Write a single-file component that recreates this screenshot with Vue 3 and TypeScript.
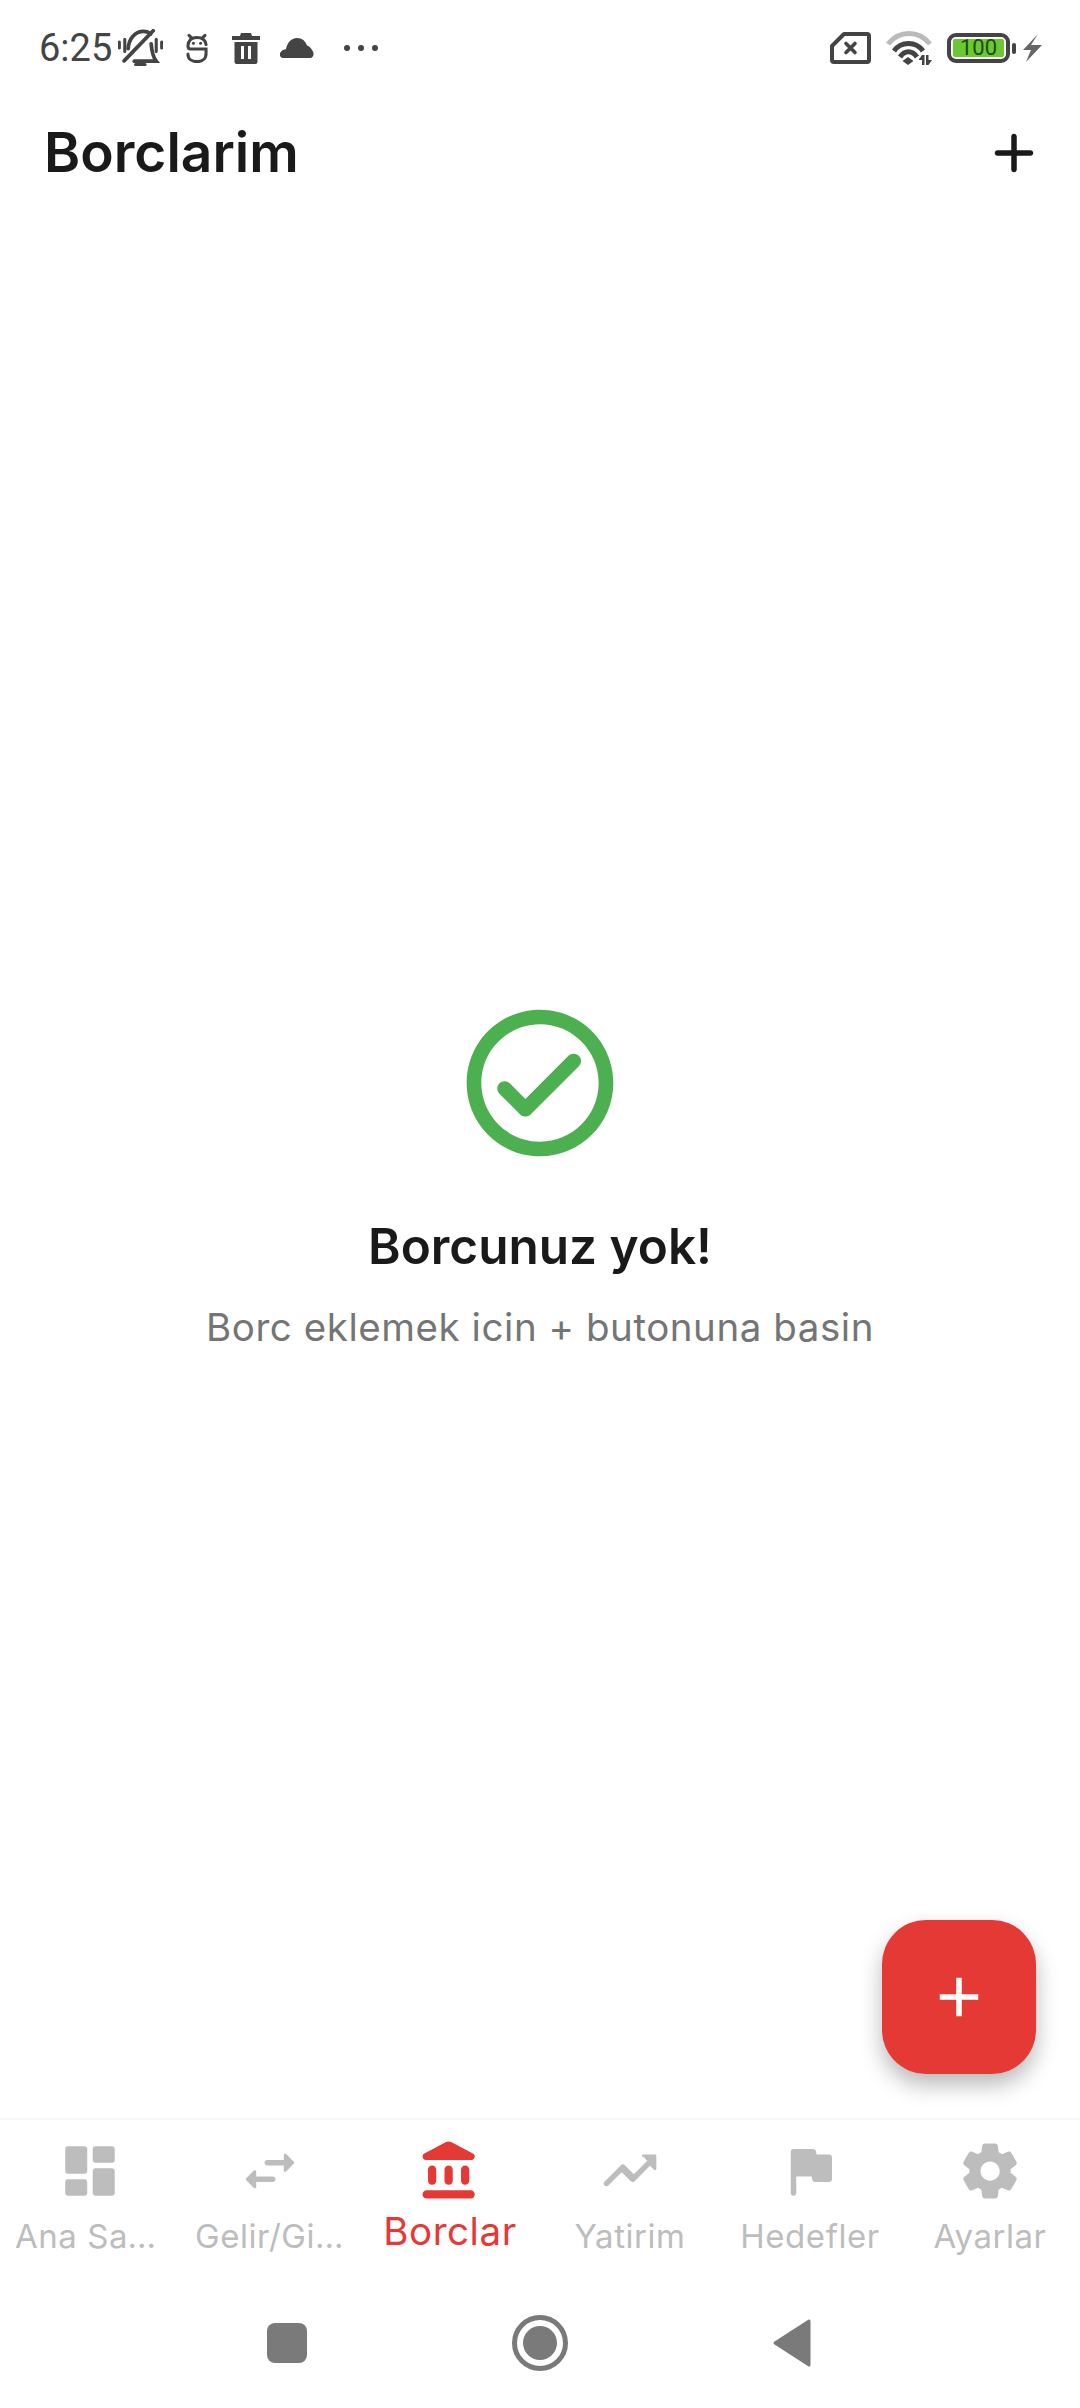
<script setup lang="ts">
interface Tab { label: string; d: string; active?: boolean }
const tabs: Tab[] = [
  { label: 'Ana Sayfa', d: 'M4 13h6c.55 0 1-.45 1-1V4c0-.55-.45-1-1-1H4c-.55 0-1 .45-1 1v8c0 .55.45 1 1 1zm0 8h6c.55 0 1-.45 1-1v-4c0-.55-.45-1-1-1H4c-.55 0-1 .45-1 1v4c0 .55.45 1 1 1zm10 0h6c.55 0 1-.45 1-1v-8c0-.55-.45-1-1-1h-6c-.55 0-1 .45-1 1v8c0 .55.45 1 1 1zM13 4v4c0 .55.45 1 1 1h6c.55 0 1-.45 1-1V4c0-.55-.45-1-1-1h-6c-.55 0-1 .45-1 1z' },
  { label: 'Gelir/Gider', d: 'M6.14 11.86l-2.78 2.79c-.19.2-.19.51 0 .71l2.78 2.79c.31.32.85.09.85-.35V16H13c.55 0 1-.45 1-1s-.45-1-1-1H6.99v-1.79c0-.45-.54-.67-.85-.35zm14.51-3.21l-2.78-2.79c-.31-.32-.85-.09-.85.35V8H11c-.55 0-1 .45-1 1s.45 1 1 1h6.01v1.79c0 .45.54.67.85.35l2.78-2.79c.2-.19.2-.51.01-.7z' },
  { label: 'Borclar', active: true, d: 'M4 11.5v4c0 .83.67 1.5 1.5 1.5S7 16.33 7 15.5v-4c0-.83-.67-1.5-1.5-1.5S4 10.67 4 11.5zm6 0v4c0 .83.67 1.5 1.5 1.5s1.5-.67 1.5-1.5v-4c0-.83-.67-1.5-1.5-1.5s-1.5.67-1.5 1.5zM3.5 22h16c.83 0 1.5-.67 1.5-1.5s-.67-1.5-1.5-1.5h-16c-.83 0-1.5.67-1.5 1.5S2.67 22 3.5 22zM16 11.5v4c0 .83.67 1.5 1.5 1.5s1.5-.67 1.5-1.5v-4c0-.83-.67-1.5-1.5-1.5s-1.5.67-1.5 1.5zM10.57 1.49l-7.9 4.16c-.41.21-.67.64-.67 1.1C2 7.44 2.56 8 3.25 8h16.51C20.44 8 21 7.44 21 6.75c0-.46-.26-.89-.67-1.1l-7.9-4.16c-.58-.31-1.28-.31-1.86 0z' },
  { label: 'Yatirim', d: 'M16.85 6.85l1.44 1.44-4.88 4.88-3.29-3.29c-.39-.39-1.02-.39-1.41 0l-6 6.01c-.39.39-.39 1.02 0 1.41.39.39 1.02.39 1.41 0L9 12.41l3.29 3.29c.39.39 1.02.39 1.41 0l5.59-5.58 1.44 1.44c.31.31.85.09.85-.35V6.5c.01-.28-.21-.5-.49-.5h-4.29c-.45 0-.67.54-.35.85z' },
  { label: 'Hedefler', d: 'M14.4 6l-.24-1.2c-.09-.46-.5-.8-.98-.8H6c-.55 0-1 .45-1 1v15c0 .55.45 1 1 1s1-.45 1-1v-6h5.6l.24 1.2c.09.47.5.8.98.8H19c.55 0 1-.45 1-1V7c0-.55-.45-1-1-1h-4.6z' },
  { label: 'Ayarlar', d: 'M19.5 12c0-.23-.01-.45-.03-.68l1.86-1.41c.4-.3.51-.86.26-1.3l-1.87-3.23c-.25-.44-.79-.62-1.25-.42l-2.15.91c-.37-.26-.76-.49-1.17-.68l-.29-2.31c-.06-.5-.49-.88-.99-.88h-3.73c-.51 0-.94.38-1 .88l-.29 2.31c-.41.19-.8.42-1.17.68l-2.15-.91c-.46-.2-1-.02-1.25.42L2.41 8.62c-.25.44-.14.99.26 1.3l1.86 1.41c-.02.22-.03.44-.03.67s.01.45.03.68l-1.86 1.41c-.4.3-.51.86-.26 1.3l1.87 3.23c.25.44.79.62 1.25.42l2.15-.91c.37.26.76.49 1.17.68l.29 2.31c.06.5.49.88.99.88h3.73c.5 0 .93-.38.99-.88l.29-2.31c.41-.19.8-.42 1.17-.68l2.15.91c.46.2 1 .02 1.25-.42l1.87-3.23c.25-.44.14-.99-.26-1.3l-1.86-1.41c.03-.23.04-.45.04-.68zm-7.46 3.5c-1.93 0-3.5-1.57-3.5-3.5s1.57-3.5 3.5-3.5 3.5 1.57 3.5 3.5-1.57 3.5-3.5 3.5z' },
]
</script>

<template>
  <div class="screen">
    <header class="status">
      <div class="status-left">
        <span class="time">6:25</span>
        <svg class="bell" width="45" height="38" viewBox="0 0 133 112" fill="none" stroke="#444" stroke-width="11" stroke-linecap="round">
          <path d="M4 38v18M20 30v36M129 38v18M113 30v36" stroke-width="9" />
          <path d="M30 58C32 28 50 9 72 7c10-1 18 2 24 8M98 44c2 22 6 40 15 51H48" />
          <path d="M18 94 104 5" />
          <path d="M52 105h28" stroke-width="9" />
        </svg>
        <svg class="face" width="22" height="30" viewBox="0 0 63 88" fill="none" stroke="#444" stroke-width="9" stroke-linecap="round">
          <path d="M8 7 14 13M55 7 49 13" />
          <path d="M58 34C56 18 46 13 31 13S6 20 5 38c0 6 2 9 8 9H58v14c0 15-12 23-27 23S5 76 5 62" />
          <circle cx="21" cy="30" r="4.500" fill="#444" stroke="none" />
          <circle cx="42" cy="30" r="4.500" fill="#444" stroke="none" />
        </svg>
        <svg class="trash" width="28" height="31" viewBox="0 0 28 31">
          <path fill="#444" d="M9 0h10l1 3h8v4H0V3h8zM2.500 9h23v20a2 2 0 0 1-2 2h-19a2 2 0 0 1-2-2zM9 13v13h3V13zm7 0v13h3V13z" fill-rule="evenodd" />
        </svg>
        <svg class="cloud" width="34" height="20" viewBox="0 0 34 20">
          <path fill="#444" d="M3 20a3.500 3.500 0 0 1-2.600-5.600c1-1.500 3-2.900 5.600-3.100C7 5 11 0 17 0c5 0 8.500 3 10 7.500 2.500.8 4.500 3 6 6 1.300 2.800.3 6.500-3 6.500z" />
        </svg>
        <span class="dots"><i></i><i></i><i></i></span>
      </div>
      <div class="status-right">
        <svg class="sim" width="41" height="32" viewBox="0 0 41 32" fill="none" stroke="#444" stroke-width="4" stroke-linejoin="round" stroke-linecap="round">
          <path d="M14 2h23a2 2 0 0 1 2 2v24a2 2 0 0 1-2 2H4a2 2 0 0 1-2-2V14z" />
          <path d="M16 11.500l9 9M25 11.500l-9 9" stroke-width="3.600" />
        </svg>
        <svg class="wifi" width="46" height="34" viewBox="0 0 46 34" fill="none">
          <path d="M2 13C13-1 33-1 44 13" stroke="#bbb" stroke-width="5" />
          <path d="M8 20C15 10 30 10 37 20" stroke="#444" stroke-width="5" />
          <path d="M14 26C19 19 26 19 31 26" stroke="#444" stroke-width="5" />
          <path fill="#444" d="M22 26l5.500 4-5.500 4-5.500-4zM36 24h2.500v10H36v-5h-3.500zM40 24h2.500v5H46l-3.500 5H40z" />
        </svg>
        <div class="battery">
          <div class="battery-body"><span class="battery-fill">100</span></div>
          <span class="battery-nub"></span>
        </div>
        <svg class="bolt" width="19" height="28" viewBox="0 0 19 28">
          <path fill="#666" d="M15 0 8 11h11L3 28l5-12H0z" />
        </svg>
      </div>
    </header>

    <div class="appbar">
      <h1 class="page-title">Borclarim</h1>
      <svg class="appbar-add" width="66" height="66" viewBox="0 0 24 24">
        <path fill="#1a1a1a" d="M18 13h-5v5c0 .55-.45 1-1 1s-1-.45-1-1v-5H6c-.55 0-1-.45-1-1s.45-1 1-1h5V6c0-.55.45-1 1-1s1 .45 1 1v5h5c.55 0 1 .45 1 1s-.45 1-1 1z" />
      </svg>
    </div>

    <main class="empty">
      <svg width="176" height="176" viewBox="0 0 24 24">
        <path fill="#4caf50" d="M12 2C6.480 2 2 6.480 2 12s4.480 10 10 10 10-4.480 10-10S17.520 2 12 2zm0 18c-4.410 0-8-3.590-8-8s3.590-8 8-8 8 3.590 8 8-3.590 8-8 8zm3.880-11.710L10 14.170l-2.120-2.120c-.39-.39-1.020-.39-1.410 0-.39.39-.39 1.020 0 1.410l2.830 2.830c.39.39 1.020.39 1.410 0L17.300 9.700c.39-.39.39-1.020 0-1.410-.39-.39-1.030-.39-1.420 0z" />
      </svg>
      <h2 class="empty-title">Borcunuz yok!</h2>
      <p class="empty-sub">Borc eklemek icin + butonuna basin</p>
    </main>

    <nav class="tabs">
      <div v-for="tab in tabs" :key="tab.label" class="tab" :class="{ active: tab.active }">
        <svg width="66" height="66" viewBox="0 0 24 24"><path fill="currentColor" :d="tab.d" /></svg>
        <span class="tab-label">{{ tab.label }}</span>
      </div>
    </nav>

    <div class="sysnav">
      <span class="sys-square"></span>
      <span class="sys-circle"><i></i></span>
      <svg width="38" height="48" viewBox="0 0 38 48">
        <path fill="#7a7a7a" stroke="#7a7a7a" stroke-width="3" stroke-linejoin="round" d="M36 2v44L2 24z" />
      </svg>
    </div>

    <button class="fab" type="button" aria-label="Ekle">
      <svg width="66" height="66" viewBox="0 0 24 24"><path fill="#fff" d="M19 13h-6v6h-2v-6H5v-2h6V5h2v6h6v2z" /></svg>
    </button>
  </div>
</template>

<style>
html, body { margin: 0; background: #fff; }
</style>

<style scoped>
.screen {
  position: relative;
  width: 1080px;
  height: 2408px;
  overflow: hidden;
  display: flex;
  flex-direction: column;
  background: #fff;
  font-family: Inter, "Noto Sans", sans-serif;
}
.status {
  flex: none;
  height: 96px;
  display: flex;
  justify-content: space-between;
  align-items: center;
  padding: 0 38px 0 39px;
  box-sizing: border-box;
}
.status-left, .status-right { display: flex; align-items: center; }
.time {
  font-family: Roboto, sans-serif;
  font-size: 38px;
  color: #444;
  width: 75px;
  white-space: nowrap;
}
.bell { margin-left: 4px; }
.face { margin-left: 23px; }
.trash { margin-left: 24px; }
.cloud { margin-left: 20px; }
.dots { display: flex; gap: 8px; margin-left: 30px; }
.dots i { width: 6px; height: 6px; border-radius: 50%; background: #444; }
.wifi { margin-left: 15px; }
.battery { display: flex; align-items: center; margin-left: 15px; }
.battery-body {
  width: 63px;
  height: 30px;
  box-sizing: border-box;
  border: 4px solid #444;
  border-radius: 9px;
  padding: 2px;
  display: flex;
}
.battery-fill {
  flex: 1;
  background: #6cc735;
  border-radius: 2px;
  color: #1d4d0c;
  font-family: Roboto, sans-serif;
  font-size: 22px;
  line-height: 18px;
  text-align: center;
}
.battery-nub { width: 4px; height: 11px; margin-left: 2px; background: #444; border-radius: 2px; }
.bolt { margin-left: 7px; }
.appbar {
  flex: none;
  height: 112px;
  display: flex;
  align-items: center;
  justify-content: space-between;
  padding: 0 33px 0 44px;
}
.appbar-add { margin-top: 2px; }
.page-title {
  margin: 0;
  font-size: 55px;
  font-weight: 600;
  color: #1a1a1a;
}
.empty {
  flex: 1;
  display: flex;
  flex-direction: column;
  align-items: center;
  justify-content: center;
  padding-top: 18px;
}
.empty-title {
  margin: 45px 0 0;
  font-size: 49.500px;
  font-weight: 600;
  color: #1a1a1a;
}
.empty-sub {
  margin: 28px 0 0;
  font-size: 38.500px;
  letter-spacing: 0.550px;
  color: #757575;
}
.tabs {
  flex: none;
  height: 160px;
  box-sizing: border-box;
  border-top: 2px solid #f7f7f7;
  display: flex;
  padding-top: 18px;
}
.tab {
  flex: 1 1 0;
  min-width: 0;
  display: flex;
  flex-direction: column;
  align-items: center;
  color: #bdbdbd;
}
.tab svg { flex: none; display: block; }
.tab-label {
  width: 150px;
  margin-top: 12px;
  font-size: 33px;
  line-height: 40px;
  letter-spacing: 0.550px;
  text-align: center;
  white-space: nowrap;
  overflow: hidden;
  text-overflow: ellipsis;
}
.tab.active { color: #e53935; }
.tab.active .tab-label { font-size: 38.500px; line-height: 48px; margin-top: 3px; overflow: visible; }
.sysnav {
  flex: none;
  height: 130px;
  display: flex;
  align-items: center;
  justify-content: center;
  gap: 205px;
  padding-right: 2px;
}
.sys-square { width: 40px; height: 40px; border-radius: 8px; background: #7a7a7a; }
.sys-circle {
  width: 56px;
  height: 56px;
  box-sizing: border-box;
  border: 5px solid #7a7a7a;
  border-radius: 50%;
  display: flex;
  align-items: center;
  justify-content: center;
}
.sys-circle i { width: 34px; height: 34px; border-radius: 50%; background: #7a7a7a; }
.fab {
  position: absolute;
  right: 44px;
  bottom: 334px;
  width: 154px;
  height: 154px;
  padding: 0;
  border: none;
  border-radius: 44px;
  background: #e53935;
  display: flex;
  align-items: center;
  justify-content: center;
  box-shadow: 0 11px 22px rgba(0, 0, 0, 0.28);
}
</style>
